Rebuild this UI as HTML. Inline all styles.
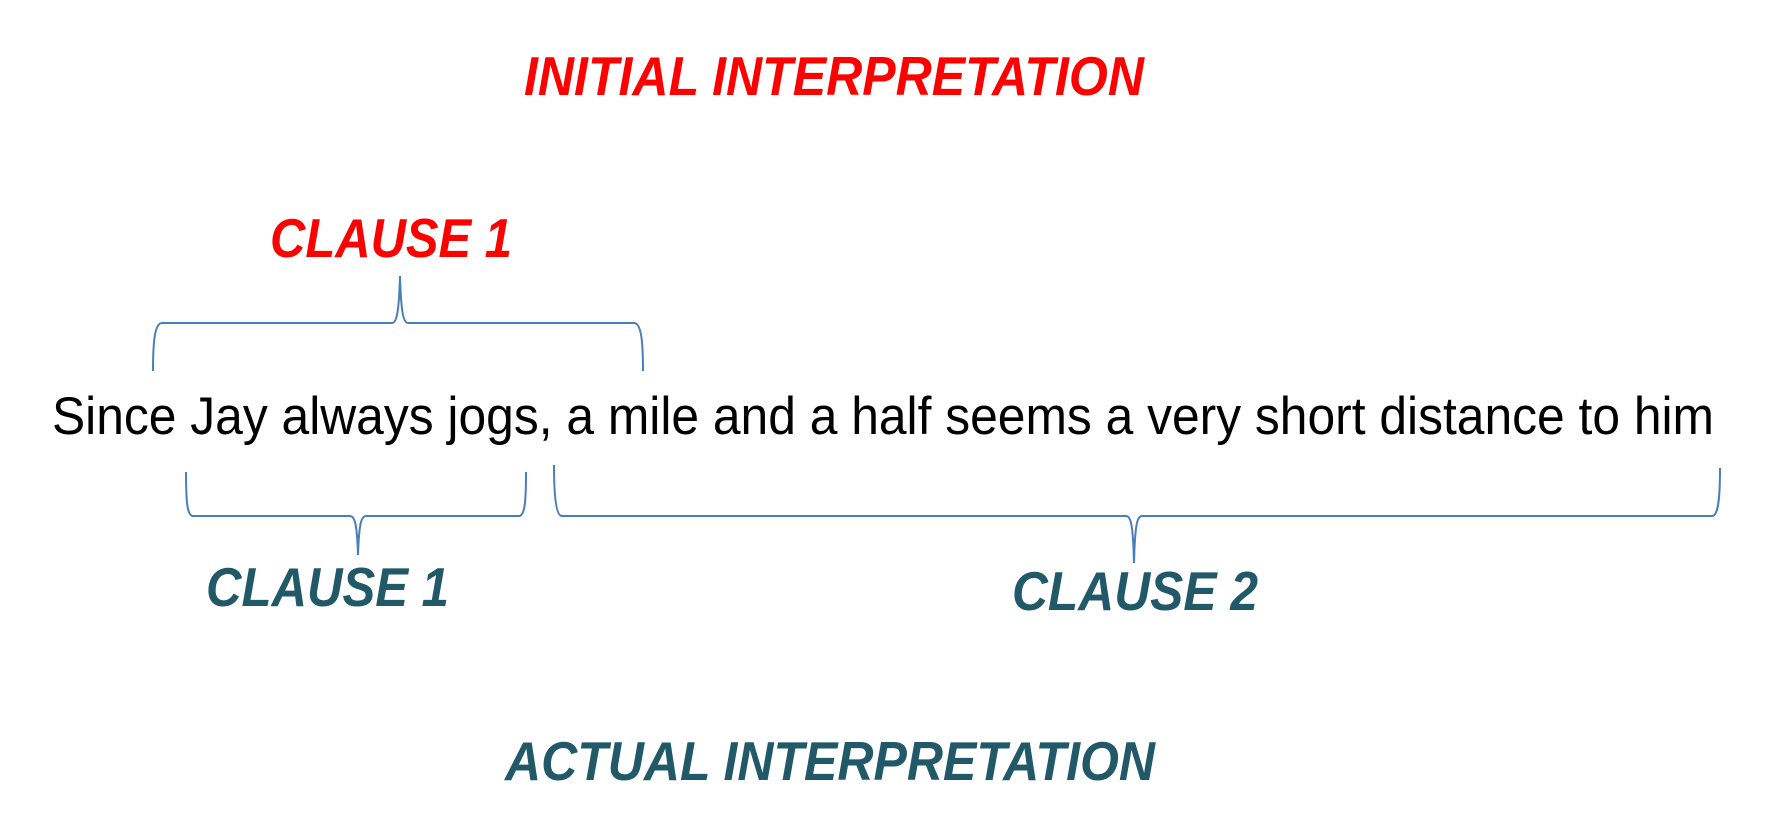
<!DOCTYPE html>
<html><head><meta charset="utf-8"><style>
html,body{margin:0;padding:0;background:#fff;width:1792px;height:823px;overflow:hidden}
svg{display:block}
.h{font-family:"Liberation Sans",Arial,sans-serif;font-weight:bold;font-style:italic}
</style></head><body>
<svg width="1792" height="823" viewBox="0 0 1792 823" xmlns="http://www.w3.org/2000/svg">
<text class="h" x="524" y="95" font-size="55" fill="#ff0000" textLength="620" lengthAdjust="spacingAndGlyphs">INITIAL INTERPRETATION</text>
<text class="h" x="270" y="257" font-size="55" fill="#ff0000" textLength="242" lengthAdjust="spacingAndGlyphs">CLAUSE 1</text>
<g fill="none" stroke="#4a7ebb" stroke-width="2">
<path d="M153 371 C153 340 155 323 162 323 L392 323 C397 323 399 310 400 276 C401 310 403 323 408 323 L634 323 C641 323 643 340 643 371"/>
<path d="M186 472 C186 500 187 516 193 516 L350 516 C355 516 357 525 358 555 C359 525 361 516 366 516 L519 516 C525 516 526 500 526 472"/>
<path d="M554 465 C554 495 556 516 562 516 L1126 516 C1131 516 1133 525 1134 563 C1135 525 1137 516 1142 516 L1712 516 C1718 516 1720 500 1720 468"/>
</g>
<text x="52" y="434" font-family="Liberation Sans,Arial,sans-serif" font-size="53" fill="#000" textLength="1662" lengthAdjust="spacingAndGlyphs">Since Jay always jogs, a mile and a half seems a very short distance to him</text>
<text class="h" x="206" y="606" font-size="55" fill="#215968" textLength="243" lengthAdjust="spacingAndGlyphs">CLAUSE 1</text>
<text class="h" x="1012" y="610" font-size="55" fill="#215968" textLength="246" lengthAdjust="spacingAndGlyphs">CLAUSE 2</text>
<text class="h" x="505" y="780" font-size="55" fill="#215968" textLength="650" lengthAdjust="spacingAndGlyphs">ACTUAL INTERPRETATION</text>
</svg>
</body></html>
